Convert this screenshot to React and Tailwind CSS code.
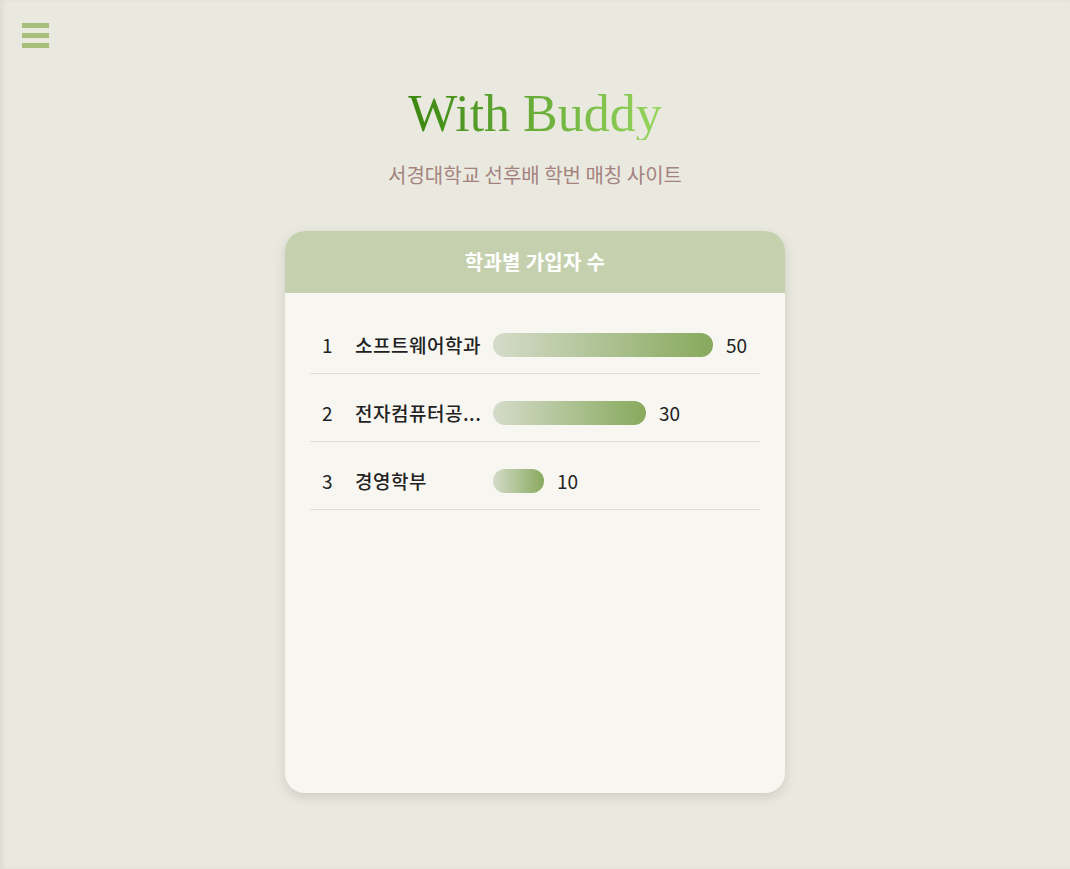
const departments = [
  { rank: 1, name: "소프트웨어학과", count: 50, bar: 220 },
  { rank: 2, name: "전자컴퓨터공...", count: 30, bar: 153 },
  { rank: 3, name: "경영학부", count: 10, bar: 51 },
];

const KR = { fontFamily: '"Noto Sans CJK KR", "Noto Sans", sans-serif' };

export default function App() {
  return (
    <div
      className="relative min-h-[869px] w-full bg-[#eae9df] shadow-[inset_3px_0_4px_rgba(0,0,0,0.05)]"
      style={KR}
    >
      {/* Menu button */}
      <button className="absolute left-[22px] top-[23px] flex flex-col gap-[5px]">
        <span className="block h-[5px] w-[27px] bg-[#a7bf7b]" />
        <span className="block h-[5px] w-[27px] bg-[#a7bf7b]" />
        <span className="block h-[5px] w-[27px] bg-[#a7bf7b]" />
      </button>

      <div className="flex flex-col items-center pt-[88px]">
        <h1
          className="bg-gradient-to-r from-[#3b870c] to-[#97d65e] bg-clip-text text-[52px] leading-none text-transparent"
          style={{ fontFamily: '"Liberation Serif", serif' }}
        >
          With Buddy
        </h1>
        <p className="mt-[21px] text-[20px] leading-[27px] text-[#a4837f]">
          서경대학교 선후배 학번 매칭 사이트
        </p>

        {/* Ranking card */}
        <div className="mt-[43px] flex h-[562px] w-[500px] flex-col overflow-hidden rounded-[20px] bg-[#f7f6f1] shadow-[0_4px_12px_rgba(0,0,0,0.12)]">
          <div className="flex h-[62px] items-center justify-center bg-[#c5d1ae]">
            <span className="text-[20px] font-bold tracking-[0.3px] text-white">학과별 가입자 수</span>
          </div>

          <div className="flex flex-col px-[25px] pt-[13px]">
            {departments.map((d) => (
              <div
                key={d.rank}
                className="flex items-center border-b border-[#dddcd6] px-3 pt-[27px] pb-[16px] text-[19px] text-[#222]"
              >
                <span className="w-[33px] leading-6">{d.rank}</span>
                <span className="mr-3 w-[126px] whitespace-nowrap leading-6 font-medium tracking-[0.5px]">
                  {d.name}
                </span>
                <div
                  className="h-6 rounded-full bg-gradient-to-r from-[#d5dbc9] to-[#88a95c]"
                  style={{ width: d.bar }}
                />
                <span className="ml-[13px] leading-6">{d.count}</span>
              </div>
            ))}
          </div>
        </div>
      </div>
    </div>
  );
}
